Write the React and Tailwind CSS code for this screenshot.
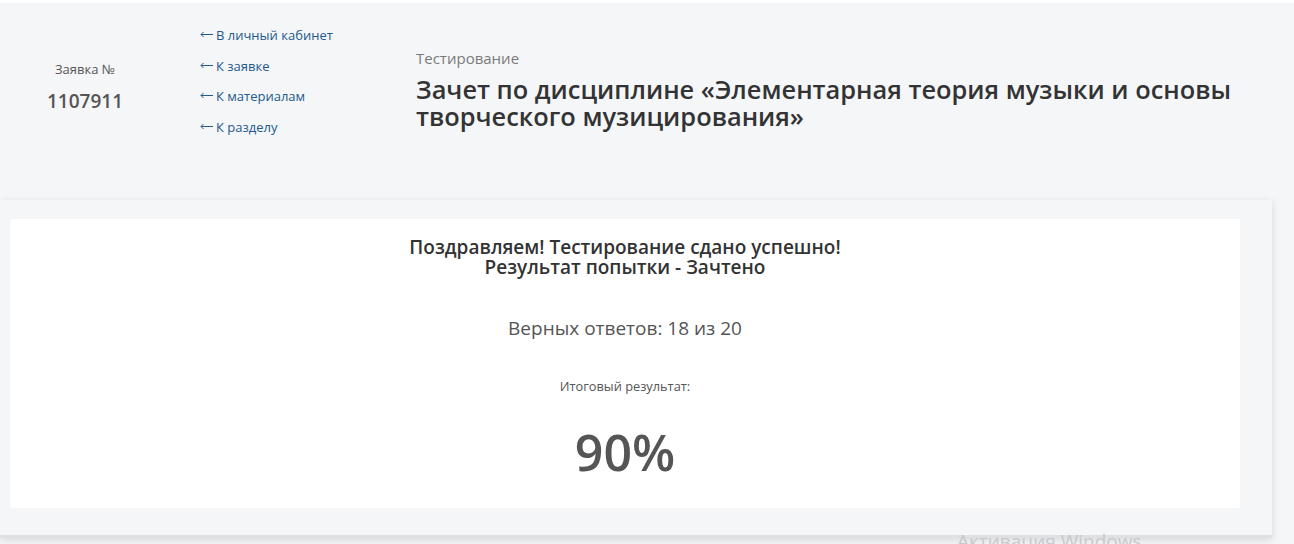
import React from 'react';

const links = ['В личный кабинет', 'К заявке', 'К материалам', 'К разделу'];

const BackArrow = () => (
  <svg width="13" height="7" viewBox="0 0 13 7" className="inline-block mr-[3px] align-[2px]" fill="none" stroke="currentColor" strokeWidth="1">
    <path d="M13 3.5H1M3.5 1L1 3.5L3.5 6" />
  </svg>
);

const App = () => {
  return (
    <div
      className="w-[1294px] h-[544px] overflow-hidden bg-[#f5f6f8] relative"
      style={{ fontFamily: '"Open Sans", "Noto Sans", sans-serif' }}
    >
      {/* Header */}
      <div className="h-[3px] bg-white" />
      <div className="flex h-[197px]">
        <div className="w-[170px] flex flex-col items-center pt-[56px]">
          <span className="text-[13px] leading-[20px] text-[#555]">Заявка №</span>
          <span className="mt-[10px] text-[19px] leading-[24px] font-semibold text-[#555]">1107911</span>
        </div>
        <div className="w-[246px] pl-[30px] pt-[22px] flex flex-col gap-[10.5px]">
          {links.map((l) => (
            <a key={l} className="text-[13px] leading-[20px] text-[#22598c] cursor-pointer whitespace-nowrap">
              <BackArrow />
              {l}
            </a>
          ))}
        </div>
        <div className="flex-1 pt-[44px] pr-[40px]">
          <div className="text-[15px] leading-[22px] text-[#7a7a7a]">Тестирование</div>
          <h1 className="mt-[7px] text-[25.4px] leading-[27px] font-semibold text-[#333]">
            Зачет по дисциплине «Элементарная теория музыки и основы творческого музицирования»
          </h1>
        </div>
      </div>

      {/* Result panel */}
      <div className="w-[1272px] h-[338px] bg-[#f5f6f8] shadow-[0_2px_8px_rgba(0,0,0,0.12)] border-b-[3px] border-[#dfe0e3] pl-[10px] pr-[32px] pt-[19px]">
        <div className="h-[289px] bg-white rounded-[2px] flex flex-col items-center text-center pt-[18px]">
          <div className="text-[19px] font-semibold text-[#333]">
            <div className="leading-[20px]">Поздравляем! Тестирование сдано успешно!</div>
            <div className="leading-[20px]">Результат попытки - Зачтено</div>
          </div>
          <div className="mt-[38px] text-[19px] leading-[26px] text-[#555]">Верных ответов: 18 из 20</div>
          <div className="mt-[36px] text-[12.8px] leading-[18px] text-[#555]">Итоговый результат:</div>
          <div className="mt-[27px] text-[50px] leading-[60px] font-semibold text-[#555]">90%</div>
        </div>
      </div>

      <div className="absolute left-[957px] top-[528px] text-[19px] leading-[26px] text-[#c8c9cc]">
        Активация Windows
      </div>
    </div>
  );
};

export default App;
